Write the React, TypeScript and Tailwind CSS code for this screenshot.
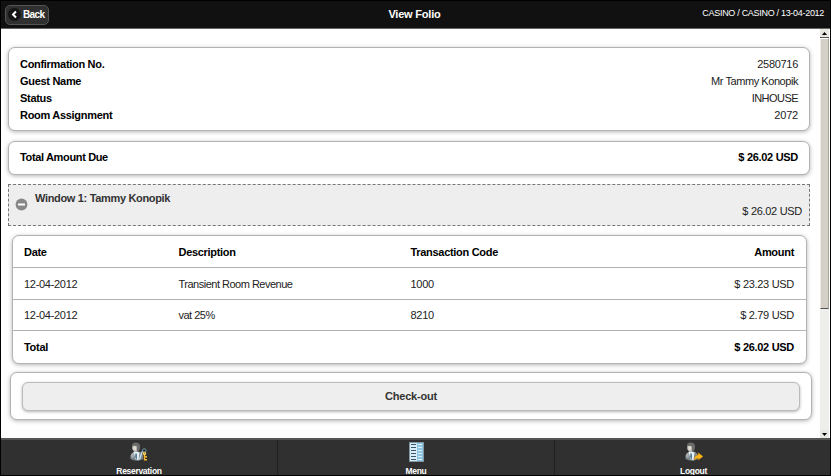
import React from 'react';

const card = 'box-border rounded-[7px] border border-[#b3b3b3] bg-white shadow-[0_1px_4px_rgba(0,0,0,0.3)]';

const guest = [
  ['Confirmation No.', '2580716', 'tracking-[-0.3px]'],
  ['Guest Name', 'Mr Tammy Konopik', 'tracking-[-0.44px]'],
  ['Status', 'INHOUSE', 'tracking-[-0.55px]'],
  ['Room Assignment', '2072', 'tracking-[-0.2px]'],
];

const transactions = [
  ['12-04-2012', 'Transient Room Revenue', '1000', '$ 23.23 USD'],
  ['12-04-2012', 'vat 25%', '8210', '$ 2.79 USD'],
];

function Person({ children }: { children: React.ReactNode }) {
  return (
    <svg width="18" height="20" viewBox="0 0 18 20" className="block">
      <path d="M.5 17V13.5Q.8 11 4 10L9 9.5Q13 11 13 14V17Q7 20.5 .5 17Z" fill="#7d858b" />
      <path d="M1 13Q2 11 4 10L3.5 16L1 15Z" fill="#a8adb0" />
      <path d="M3.5 10L5 9L9.5 10.5L8.5 18.5L5.5 17Z" fill="#e7f0f5" />
      <path d="M5.5 11L7 12L7 18L5 15Z" fill="#527b98" />
      <path d="M2.2 4Q3 1.5 6 1.5Q9.5 1.5 9.5 5Q9.5 9.5 6 10Q3 9.5 2.2 7Z" fill="#b7b5ae" />
      <path d="M1.8 4Q2 .5 5.5 .5Q10.5 .5 10 5L9 9L7 9.5V4.5Q5 3 3 4.5Z" fill="#6b6b69" />
      <path d="M3 4.5Q5 3.5 6 5V8.5L3.5 8Z" fill="#dedbd2" />
      {children}
    </svg>
  );
}

function KeyPerson() {
  return (
    <Person>
      <path d="M12.5 9L9.5 17.5" stroke="#c4e0ef" strokeWidth="1.3" />
      <circle cx="14.3" cy="8.5" r="1.8" fill="none" stroke="#6e91a5" strokeWidth="1" />
      <path d="M14.5 10V18.5M14.5 14.7H17M14.5 17.7H17" stroke="#f2b62e" strokeWidth="1.4" />
      <circle cx="14.5" cy="11.5" r="1.7" fill="#ffd65d" />
      <circle cx="14.5" cy="11" r=".6" fill="#735823" />
    </Person>
  );
}

function ExitPerson() {
  return (
    <Person>
      <path d="M9.5 18Q9 13.5 13.2 13V10.7L18 14.5L13.2 18V16Q11 16 9.5 18Z" fill="#fbb817" stroke="#c98206" strokeWidth=".4" />
    </Person>
  );
}

function MenuIcon() {
  return (
    <svg width="15" height="20" viewBox="0 0 15 20" className="block">
      <path d="M.5 .5H14.5V19.5H.5Z" fill="#d9edf6" stroke="#8298a5" />
      <path d="M8 1H14V19H8Z" fill="#8fc3e2" />
      <path d="M2 2.5H7M2 5.5H7M2 8.5H7M2 11.5H7M2 14.5H7M2 17.5H7" stroke="#38566c" />
      <path d="M9 2.5H13M9 5.5H13M9 8.5H13M9 11.5H13M9 14.5H13M9 17.5H13" stroke="#d7effa" />
    </svg>
  );
}

export default function App() {
  return (
    <div className="flex h-[476px] w-[831px] flex-col overflow-hidden whitespace-nowrap border border-black bg-white font-['Liberation_Sans',Arial,sans-serif] text-[11px] leading-[17px] tracking-[-0.3px] text-[#222]">
      <header className="grid h-7 shrink-0 grid-cols-3 items-center border-b border-[#666] bg-[#111] text-white">
        <button className="ml-1 flex h-5 w-11 items-center rounded-[5px] border border-[#555] bg-[#303030] pl-[2px] text-[10px] font-bold">
          <span className="mr-[2px] flex h-[13px] w-[13px] shrink-0 items-center justify-center rounded-full bg-[#151515]">
            <svg width="7" height="9" viewBox="0 0 7 9"><path d="M5 1.5L2 4.5L5 7.5" fill="none" stroke="white" strokeWidth="2" /></svg>
          </span>
          <span className="pb-px tracking-[-0.6px]">Back</span>
        </button>
        <h1 className="pr-[2px] pb-px text-center text-[11px] font-bold tracking-[-0.2px]">View Folio</h1>
        <span className="pr-[6px] pb-[2px] text-right text-[9px]">CASINO / CASINO / 13-04-2012</span>
      </header>

      <div className="flex h-[409px] shrink-0">
        <main className="w-[819px] shrink-0 pt-[18px]">
          <section className={card + ' ml-[7px] h-[84px] w-[802px] px-[11px] pt-[8px]'}>
            {guest.map((row) => (
              <div key={row[0]} className="flex h-[17px] justify-between">
                <b className="text-black">{row[0]}</b>
                <span className={row[2]}>{row[1]}</span>
              </div>
            ))}
          </section>

          <section className={card + ' mt-[10px] ml-[7px] flex h-[34px] w-[802px] items-center justify-between px-[11px] pb-px font-bold text-black'}>
            <span className="tracking-[-0.35px]">Total Amount Due</span>
            <span>$ 26.02 USD</span>
          </section>

          <section className="mt-[9px] ml-[7px] flex h-[42px] w-[802px] border border-dashed border-[#777] bg-[#eee] pr-[7px] pl-[6px]">
            <svg width="13" height="13" viewBox="0 0 13 13" className="mt-[13px] mr-[7px]">
              <circle cx="6.5" cy="6.5" r="5.9" fill="#888" />
              <path d="M3 6.5H10" stroke="white" strokeWidth="2" />
            </svg>
            <b className="mt-[5px] tracking-[-0.33px] text-[#333]">Window 1: Tammy Konopik</b>
            <span className="mt-[18px] ml-auto">$ 26.02 USD</span>
          </section>

          <section className={card + ' mt-[9px] ml-[11px] h-[129px] w-[795px]'}>
            <div className="grid h-[32px] grid-cols-[154.5px_232px_1fr_auto] items-center border-b border-[#b3b3b3] pt-px pr-[12px] pl-[11px] font-bold text-black">
              <span>Date</span><span>Description</span><span>Transaction Code</span><span className="tracking-[-0.3px]">Amount</span>
            </div>
            {transactions.map((row, i) => (
              <div key={row[1]} className={(i === 0 ? 'h-[32px] pt-px' : 'h-[31px]') + ' grid grid-cols-[154.5px_232px_1fr_auto] items-center border-b border-[#b3b3b3] pr-[12px] pl-[11px]'}>
                <span>{row[0]}</span>
                <span className="tracking-[-0.5px]">{row[1]}</span>
                <span>{row[2]}</span>
                <span>{row[3]}</span>
              </div>
            ))}
            <div className="flex h-[32px] items-center justify-between pr-[12px] pl-[11px] font-bold text-black">
              <span>Total</span><span>$ 26.02 USD</span>
            </div>
          </section>

          <section className={card + ' mt-[8px] ml-[9px] h-[48px] w-[802px] px-[11px] pt-[9px]'}>
            <button className="flex h-[29px] w-[778px] items-center justify-center rounded-[6px] border border-[#bbb] bg-[#eee] font-bold tracking-[-0.2px] text-[#333] shadow-[0_1px_3px_rgba(0,0,0,0.3)]">
              Check-out
            </button>
          </section>
        </main>

        <div className="flex w-[9px] flex-col bg-[#eeeeeb]">
          <div className="flex h-[9px] items-center justify-center border-b border-[#555] bg-[#e9e7e2]">
            <svg width="5" height="3"><path d="M0 3L2.5 0L5 3Z" fill="black" /></svg>
          </div>
          <div className="h-[271px] border-r border-b border-l border-t border-t-white border-r-[#aaa49d] border-b-[#555] border-l-[#eeeae4] bg-[#d4d0c8]" />
          <div className="mt-auto flex h-[9px] items-center justify-center border-t border-[#eee] bg-[#e9e7e2]">
            <svg width="5" height="3"><path d="M0 0L2.5 3L5 0Z" fill="black" /></svg>
          </div>
        </div>
      </div>

      <footer className="grid h-[37px] shrink-0 grid-cols-[277px_277px_275px] border-t-2 border-[#555] bg-[#303030] text-[8.5px] leading-[10px] font-bold text-white">
        <button className="flex flex-col items-center border-r border-[#202020] pt-[2px]"><KeyPerson /><span className="mt-[4px]">Reservation</span></button>
        <button className="flex flex-col items-center border-r border-[#202020] pt-[2px]"><MenuIcon /><span className="mt-[4px]">Menu</span></button>
        <button className="flex flex-col items-center pt-[2px] pl-[2px]"><ExitPerson /><span className="mt-[4px]">Logout</span></button>
      </footer>
    </div>
  );
}
